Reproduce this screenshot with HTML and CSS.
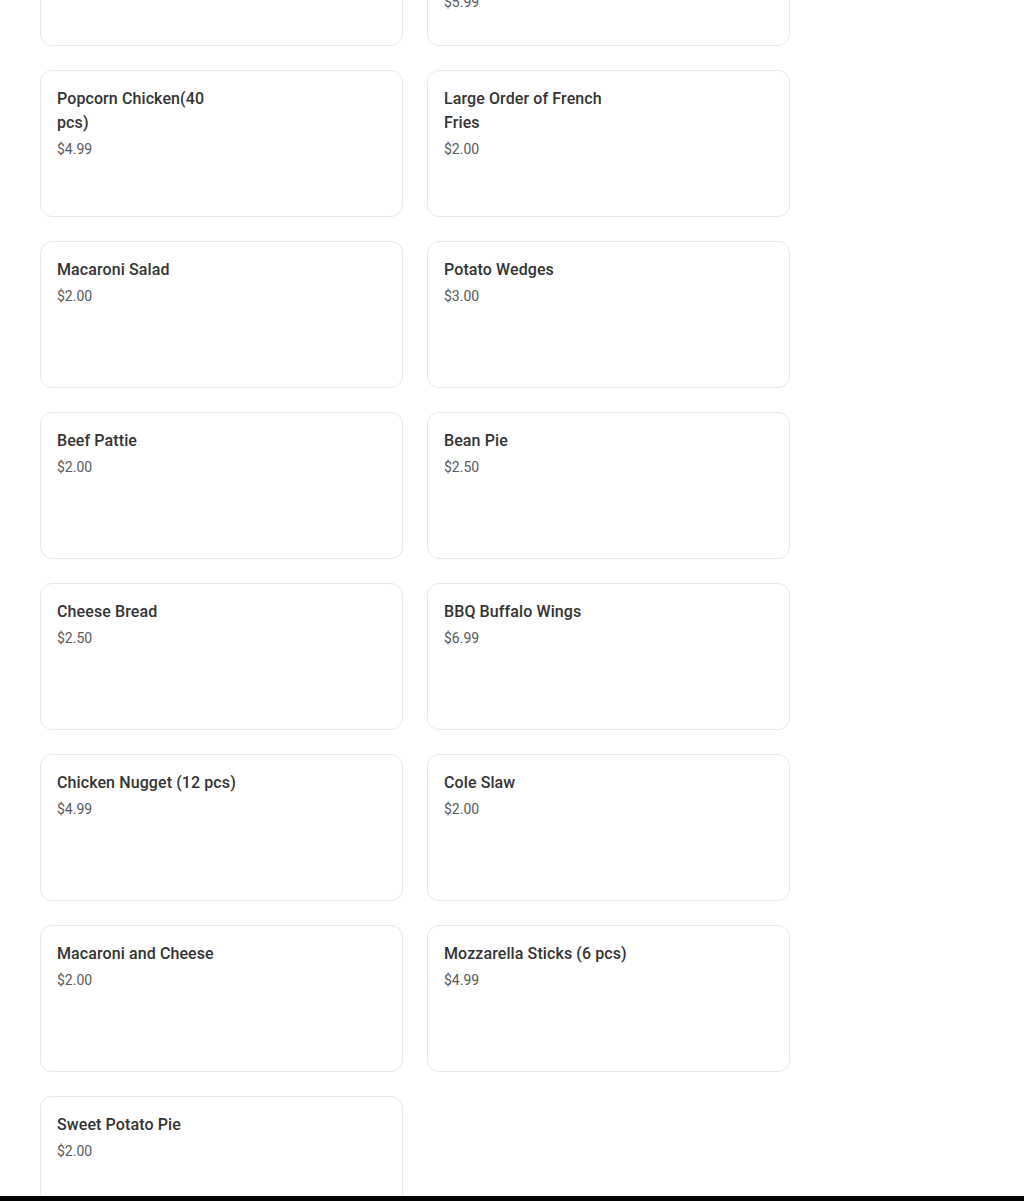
FILE: index.html
```html
<!DOCTYPE html>
<html lang="en">
<head>
<meta charset="utf-8">
<title>Menu</title>
<link rel="stylesheet" href="styles.css">
</head>
<body>
<main class="menu">
  <ul class="grid">
    <li class="card"><div class="title">Two Piece Fish Dinner</div><div class="price">$4.99</div></li>
    <li class="card"><div class="title">Fish Sandwich with French Fries and a Canned Soda</div><div class="price">$5.99</div></li>
    <li class="card"><div class="title">Popcorn Chicken(40<br>pcs)</div><div class="price">$4.99</div></li>
    <li class="card"><div class="title">Large Order of French Fries</div><div class="price">$2.00</div></li>
    <li class="card"><div class="title">Macaroni Salad</div><div class="price">$2.00</div></li>
    <li class="card"><div class="title">Potato Wedges</div><div class="price">$3.00</div></li>
    <li class="card"><div class="title">Beef Pattie</div><div class="price">$2.00</div></li>
    <li class="card"><div class="title">Bean Pie</div><div class="price">$2.50</div></li>
    <li class="card"><div class="title">Cheese Bread</div><div class="price">$2.50</div></li>
    <li class="card"><div class="title">BBQ Buffalo Wings</div><div class="price">$6.99</div></li>
    <li class="card"><div class="title">Chicken Nugget (12 pcs)</div><div class="price">$4.99</div></li>
    <li class="card"><div class="title">Cole Slaw</div><div class="price">$2.00</div></li>
    <li class="card"><div class="title">Macaroni and Cheese</div><div class="price">$2.00</div></li>
    <li class="card"><div class="title">Mozzarella Sticks (6 pcs)</div><div class="price">$4.99</div></li>
    <li class="card"><div class="title">Sweet Potato Pie</div><div class="price">$2.00</div></li>
  </ul>
</main>
<div class="bottom-bar"></div>
</body>
</html>
```

FILE: styles.css
```css
html, body {
  margin: 0;
  padding: 0;
  background: #ffffff;
  font-family: Roboto, "Liberation Sans", sans-serif;
  overflow: hidden;
}

.menu {
  padding-left: 40px;
  margin-top: -101px;
}

.grid {
  list-style: none;
  margin: 0;
  padding: 0;
  display: grid;
  grid-template-columns: 363px 363px;
  column-gap: 24px;
  row-gap: 24px;
}

.card {
  box-sizing: border-box;
  height: 147px;
  border: 1px solid #e8e8e8;
  border-radius: 12px;
  padding: 16px 16px 16px;
}

.title {
  max-width: 184px;
  font-size: 16px;
  line-height: 24px;
  font-weight: 500;
  letter-spacing: 0.1px;
  color: #333333;
}

.price {
  margin-top: 4px;
  font-size: 14px;
  line-height: 20px;
  color: #5a5a5a;
}

.bottom-bar {
  position: fixed;
  left: 0;
  right: 0;
  bottom: 0;
  height: 5px;
  background: #000000;
}
```
